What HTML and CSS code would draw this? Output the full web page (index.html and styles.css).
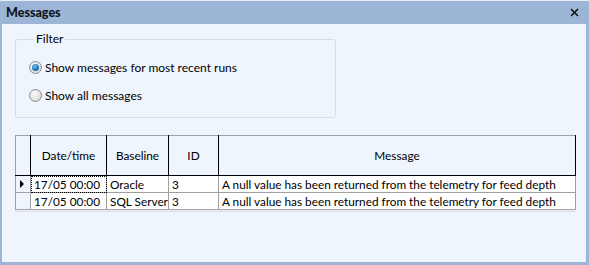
FILE: index.html
```html
<!DOCTYPE html>
<html>
<head>
<meta charset="utf-8">
<link rel="stylesheet" href="styles.css">
</head>
<body>
<div class="window">
  <div class="titlebar">
    <span class="title">Messages</span>
    <svg class="close" width="9" height="9" viewBox="0 0 9 9"><path d="M1 1 L8 8 M8 1 L1 8" stroke="#111" stroke-width="1.6" fill="none"/></svg>
  </div>
  <div class="content">
    <fieldset class="filter">
      <legend>Filter</legend>
      <label class="radio"><span class="dot checked"></span>Show messages for most recent runs</label>
      <label class="radio"><span class="dot"></span>Show all messages</label>
    </fieldset>
    <div class="gridwrap">
      <table class="grid">
        <thead>
          <tr>
            <th class="rh"></th>
            <th class="c-date">Date/time</th>
            <th class="c-base">Baseline</th>
            <th class="c-id">ID</th>
            <th class="c-msg">Message</th>
          </tr>
        </thead>
        <tbody>
          <tr>
            <td class="rh"><span class="arrow"></span></td>
            <td class="focus">17/05 00:00</td>
            <td>Oracle</td>
            <td>3</td>
            <td>A null value has been returned from the telemetry for feed depth</td>
          </tr>
          <tr>
            <td class="rh"></td>
            <td>17/05 00:00</td>
            <td>SQL Server</td>
            <td>3</td>
            <td>A null value has been returned from the telemetry for feed depth</td>
          </tr>
        </tbody>
      </table>
    </div>
  </div>
</div>
</body>
</html>
```

FILE: styles.css
```css
html, body {
  margin: 0;
  padding: 0;
  background: #9db5d8;
}
body {
  width: 589px;
  height: 265px;
  overflow: hidden;
  font-family: "Lato", "Noto Sans", sans-serif;
  font-size: 12px;
  color: #000;
}
.window {
  box-sizing: border-box;
  width: 589px;
  height: 265px;
  border-top: 1px solid #e6eef8;
  padding: 0 3px 3px 2px;
  display: flex;
  flex-direction: column;
  background: #9db5d8;
}
.titlebar {
  height: 23px;
  display: flex;
  align-items: center;
  justify-content: space-between;
  padding: 0 7px 0 4px;
  background: #9cb4d6;
}
.title {
  font-family: "Lato", sans-serif;
  font-weight: 900;
  font-size: 12.5px;
  color: #0c1620;
}
.close {
  display: block;
}
.content {
  flex: 1;
  background: #eef5fd;
  padding: 7px 11px 0 13px;
}
.filter {
  width: 321px;
  box-sizing: border-box;
  margin: 0;
  padding: 11px 0 12px 13px;
  border: 1px solid #d5dde5;
  border-radius: 3px;
  display: flex;
  flex-direction: column;
  gap: 9px;
}
.filter legend {
  padding: 0 2px;
  margin-left: 5px;
  font-size: 12px;
  line-height: 16px;
}
.radio {
  display: flex;
  align-items: center;
  height: 19px;
  gap: 3px;
}
.dot {
  width: 11px;
  height: 11px;
  border-radius: 50%;
  border: 1px solid #8d8d8d;
  background: radial-gradient(circle at 40% 35%, #fafafa 0%, #dedede 70%, #cfcfcf 100%);
  display: inline-block;
  box-sizing: content-box;
  position: relative;
}
.dot.checked::after {
  content: "";
  position: absolute;
  left: 2px;
  top: 2px;
  width: 7px;
  height: 7px;
  border-radius: 50%;
  background: radial-gradient(circle at 40% 35%, #6bc3f5 0%, #1b6fb5 60%, #0e4c86 100%);
}
.gridwrap {
  margin-top: 17px;
  width: 561px;
  border-bottom: 1px solid #d8dde2;
  padding-bottom: 1px;
}
.grid {
  border-collapse: collapse;
  width: 561px;
  table-layout: fixed;
  font-size: 11.8px;
}
.grid th {
  height: 39px;
  font-weight: normal;
  text-align: center;
  padding: 0;
  border-left: 1px solid #000;
  border-right: 1px solid #000;
  border-top: 1px solid #a0a0a0;
  border-bottom: 1px solid #000;
  background: #eef5fd;
}
.grid th.rh {
  border-left: 1px solid #a0a0a0;
}
.grid td {
  height: 16px;
  box-sizing: border-box;
  padding: 0 0 0 3px;
  border: 1px solid #a0a0a0;
  background: #fff;
  white-space: nowrap;
  overflow: hidden;
  line-height: 15px;
}
.grid tbody tr {
  height: 17px;
}
.grid td.rh {
  background: #eef5fd;
  padding: 0;
  position: relative;
}
.rh { width: 14px; }
.c-date { width: 75px; }
.c-base { width: 61px; }
.c-id { width: 49px; }
.arrow {
  position: absolute;
  left: 4px;
  top: 4px;
  width: 0;
  height: 0;
  border-top: 4px solid transparent;
  border-bottom: 4px solid transparent;
  border-left: 4px solid #000;
}
.grid td.focus {
  outline: 1px dotted #000;
  outline-offset: -1px;
}
```
